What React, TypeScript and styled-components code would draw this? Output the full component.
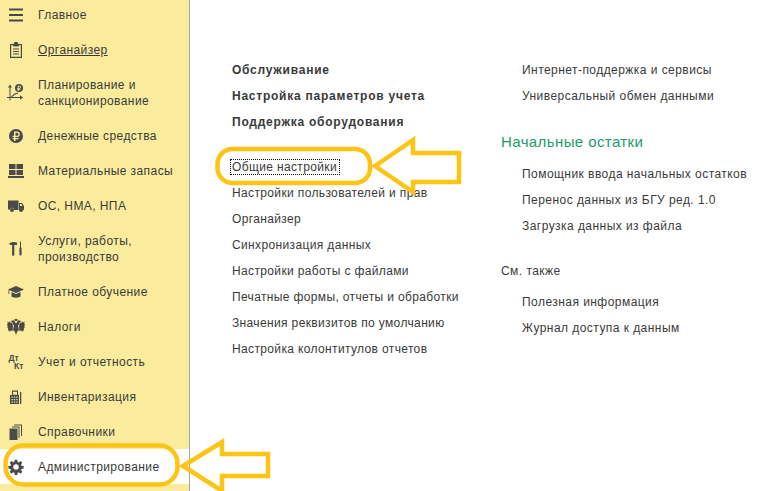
import React from "react";
import styled, { createGlobalStyle } from "styled-components";

const Global = createGlobalStyle`
  html, body { margin: 0; padding: 0; background: #fff; }
  body { font-family: "Liberation Sans", Arial, sans-serif; }
`;
const Page = styled.div`
  position: relative; width: 761px; height: 491px; overflow: hidden; display: flex; background: #fff;
`;
const Sidebar = styled.nav`
  width: 189px; height: 491px; flex: none; background: #fbec9d; border-right: 1px solid #a8a8a0; overflow: hidden;
`;
const SideList = styled.div`
  margin-top: -3px; display: flex; flex-direction: column;
`;
const SideItem = styled.div<{ $tall?: boolean; $active?: boolean }>`
  height: ${(p) => (p.$tall ? 51 : 35)}px; display: flex; align-items: center; flex: none;
  background: ${(p) => (p.$active ? "#fff" : "transparent")};
`;
const IconSlot = styled.div`
  width: 38px; flex: none; display: flex; justify-content: center; padding-right: 6px; box-sizing: border-box; color: #4a4a4a;
  svg { display: block; }
`;
const SideLabel = styled.span<{ $link?: boolean }>`
  font-size: 12px; line-height: 16px; letter-spacing: 0.42px; color: #3a3a3a; white-space: pre-line;
  text-decoration: ${(p) => (p.$link ? "underline" : "none")};
`;
const Main = styled.main`
  flex: 1; display: flex; padding-top: 57px; box-sizing: border-box;
`;
const LeftCol = styled.div`
  width: 269px; margin-left: 42px; flex: none; display: flex; flex-direction: column; letter-spacing: 0.36px;
`;
const RightCol = styled.div`
  display: flex; flex-direction: column; letter-spacing: 0.45px;
`;
const Row = styled.div<{ $bold?: boolean }>`
  height: 26px; line-height: 26px; font-size: 12px; white-space: nowrap;
  color: #3a3a3a; font-weight: ${(p) => (p.$bold ? 700 : 400)};
  letter-spacing: ${(p) => (p.$bold ? "0.76px" : "inherit")};
`;
const FocusText = styled.span`
  outline: 1px dotted #111; outline-offset: 0; padding: 0 2px 0 1px; margin-left: -1px;
`;
const Gap = styled.div<{ $h: number }>`
  height: ${(p) => p.$h}px; flex: none;
`;
const Group = styled.div`
  padding-left: 21px; display: flex; flex-direction: column;
`;
const GreenTitle = styled.div`
  font-size: 15px; line-height: 20px; letter-spacing: 0.4px; color: #1d9b6c; height: 20px;
`;
const SubTitle = styled.div`
  font-size: 12px; line-height: 16px; color: #3a3a3a; height: 16px;
`;
const Overlay = styled.svg`
  position: absolute; left: 0; top: 0; pointer-events: none;
`;

const S = { width: 18, height: 18, viewBox: "0 0 18 18", fill: "currentColor" } as const;
const icons: Record<string, React.ReactNode> = {
  menu: <svg {...S}><path d="M2 2.500h14v2H2zM2 8h14v2H2zM2 13.500h14v2H2z" /></svg>,
  org: <svg {...S}><path fillRule="evenodd" d="M3 3h3.500L7.500 1h3l1 2H15v14H3zM4.200 4.200v11.600h9.600V4.200h-2v1.300H6.200V4.200z" /><path d="M6 7.500h6v1H6zM6 10h6v1H6zM6 12.500h6v1H6z" /></svg>,
  plan: <svg {...S}><path d="M3 .5 1 3.500h1.500V13H0v1h2.500v2.500h1V14H13v1.800l3-2.300-3-2.300V13H3.500V3.500H5z" /><path d="M4 12.500l3.500-3 3.500-1 .3 1-3.200.9-3.300 2.900z" /><circle cx="12" cy="4" r="4" /><path fill="#fbec9d" d="M10.800 1.800h1.700a1.400 1.400 0 0 1 0 2.900h-.8v.6h1.700v.8h-1.700v1h-.9v-1h-.7v-.8h.7v-.6h-.7v-.8h.7zm.9.800v1.300h.8a.65.65 0 0 0 0-1.300z" /></svg>,
  money: <svg {...S}><circle cx="9" cy="9" r="7" /><path fill="#fbec9d" d="M7 4.500h3a2.800 2.800 0 0 1 0 5.600H8.500V11h3v1.300h-3V14H7v-1.700H5.500V11H7v-.9H5.500V8.800H7zm1.500 1.300v3H10a1.500 1.500 0 0 0 0-3z" /></svg>,
  grid: <svg {...S}><path d="M2 2h6.500v5H2zM9.500 2H16v5H9.500zM2 8h6.500v5H2zM9.500 8H16v5H9.500zM1 14h16v2H1z" /></svg>,
  truck: <svg {...S}><path d="M1 3.500h10.500V13H7a2 2 0 0 0-4-.5H1z" /><path fillRule="evenodd" d="M12 6h3l2 3v4h-.8a2.200 2.200 0 0 0-4.200 0zM13 7v2h2.500L14.300 7z" /><circle cx="5" cy="13" r="2" /><circle cx="14" cy="13" r="2" /></svg>,
  tools: <svg {...S}><path d="M2 4c1-1.500 3-2 5-2l3 .5V5H7.300v9.800a1.100 1.100 0 0 1-2.200 0V5H3.500z" /><path d="M13 1.500h1v5.700l.6 1v6.300a1.100 1.100 0 0 1-2.200 0V8.200l.6-1z" /></svg>,
  cap: <svg {...S}><path d="M9 3 1 6.500l8 3.500 8-3.500z" /><path d="M4.500 9v4.500c1.500 1.500 7.500 1.500 9 0V9L9 11z" /><path d="M1.500 7h.8v4h-.8z" /></svg>,
  eagle: <svg {...S}>
    <path d="M7.300 1h3.400l-.6 2H7.900z" />
    <path d="M4.500 3c1-1 2.600-.8 3.200.3L8.300 5h1.400l.6-1.700c.6-1.100 2.200-1.300 3.200-.3l.7.900-1.600.4-.2 1.500-1.400 1.900 1 4.300-1.800 1.800L9 17l-1.200-3.200L6 12l1-4.300-1.400-1.900-.2-1.500-1.600-.4z" />
    <path d="M.5 3.500 2 4.500l.8-1.300 1 2 .9-.7 1.300 3.300-.3 5-2-.2-.5 1.400-1.200-1.500-.7.4-.2-2.400-.8-1.200.5-1.200-.9-1.300.7-.8z" />
    <path d="M17.500 3.500 16 4.500l-.8-1.300-1 2-.9-.7-1.300 3.300.3 5 2-.2.5 1.400 1.200-1.500.7.4.2-2.400.8-1.200-.5-1.200.9-1.300-.7-.8z" />
  </svg>,
  dtkt: <svg {...S}>
    <text x="1.500" y="7.500" fontFamily="'Liberation Sans', sans-serif" fontSize="8.500" fontWeight="700">Дт</text>
    <text x="7" y="15.500" fontFamily="'Liberation Sans', sans-serif" fontSize="8.500" fontWeight="700">Кт</text>
  </svg>,
  calc: <svg {...S}><path fillRule="evenodd" d="M5 2.500h6V7h1v9H3V7h2zM6 3.700v3h4v-3z" /><path d="M13 4h1.300v12H13z" /><path fill="#fbec9d" d="M4.500 8.500h1.300v1.300H4.500zM6.900 8.500h1.300v1.300H6.900zM9.300 8.500h1.300v1.300H9.300zM4.500 11h1.300v1.300H4.500zM6.900 11h1.300v1.300H6.900zM9.300 11h1.300v1.300H9.300zM4.500 13.500h1.300v1.300H4.500zM6.900 13.500h1.300v1.300H6.900zM9.300 13.500h1.300v1.300H9.300z" /></svg>,
  books: <svg {...S}><path d="M2.500 5.500h8V17h-8z" /><path d="M5 3.500h7.500V15h-1V4.500H5zM7 1.500h8V13h-1V2.500H7z" /></svg>,
  gear: <svg {...S}><g transform="translate(1.350 1.350) scale(.85)"><path fillRule="evenodd" d="M7.500 .5h3l.4 2.500 1.300.6L14.300 2l2.100 2.100-1.500 2.100.6 1.300 2.500.4v3l-2.500.4-.6 1.300 1.500 2.100-2.100 2.100-2.100-1.500-1.300.6-.4 2.500h-3l-.4-2.500-1.300-.6-2.100 1.500-2.100-2.100 1.500-2.100-.6-1.300L0 10.900v-3l2.500-.4.600-1.300L1.600 4.100 3.700 2l2.100 1.500 1.300-.6zM9 5.800a3.200 3.200 0 1 0 0 6.400 3.200 3.200 0 0 0 0-6.400z" /></g></svg>,
};

const side = [
  { i: "menu", t: "Главное" },
  { i: "org", t: "Органайзер", link: true },
  { i: "plan", t: "Планирование и\nсанкционирование", tall: true },
  { i: "money", t: "Денежные средства" },
  { i: "grid", t: "Материальные запасы" },
  { i: "truck", t: "ОС, НМА, НПА" },
  { i: "tools", t: "Услуги, работы,\nпроизводство", tall: true },
  { i: "cap", t: "Платное обучение" },
  { i: "eagle", t: "Налоги" },
  { i: "dtkt", t: "Учет и отчетность" },
  { i: "calc", t: "Инвентаризация" },
  { i: "books", t: "Справочники" },
  { i: "gear", t: "Администрирование", active: true },
];

const ring = "#fdc416";

export default function App() {
  return (
    <Page>
      <Global />
      <Sidebar>
        <SideList>
          {side.map((s) => (
            <SideItem key={s.t} $tall={s.tall} $active={s.active}>
              <IconSlot>{icons[s.i]}</IconSlot>
              <SideLabel $link={s.link}>{s.t}</SideLabel>
            </SideItem>
          ))}
        </SideList>
      </Sidebar>
      <Main>
        <LeftCol>
          <Row $bold>Обслуживание</Row>
          <Row $bold>Настройка параметров учета</Row>
          <Row $bold>Поддержка оборудования</Row>
          <Gap $h={19} />
          <Row><FocusText>Общие настройки</FocusText></Row>
          <Row>Настройки пользователей и прав</Row>
          <Row>Органайзер</Row>
          <Row>Синхронизация данных</Row>
          <Row>Настройки работы с файлами</Row>
          <Row>Печатные формы, отчеты и обработки</Row>
          <Row>Значения реквизитов по умолчанию</Row>
          <Row>Настройка колонтитулов отчетов</Row>
        </LeftCol>
        <RightCol>
          <Group>
            <Row>Интернет-поддержка и сервисы</Row>
            <Row>Универсальный обмен данными</Row>
          </Group>
          <Gap $h={23} />
          <GreenTitle>Начальные остатки</GreenTitle>
          <Gap $h={9} />
          <Group>
            <Row>Помощник ввода начальных остатков</Row>
            <Row>Перенос данных из БГУ ред. 1.0</Row>
            <Row>Загрузка данных из файла</Row>
          </Group>
          <Gap $h={24} />
          <SubTitle>См. также</SubTitle>
          <Gap $h={10} />
          <Group>
            <Row>Полезная информация</Row>
            <Row>Журнал доступа к данным</Row>
          </Group>
        </RightCol>
      </Main>
      <Overlay width={761} height={491} viewBox="0 0 761 491" fill="none" stroke={ring} strokeWidth={4.5}>
        <rect x="5.500" y="445.500" width="172" height="39" rx="18" />
        <path d="M183 466 222 442V454H268V476H222V491Z" />
        <rect x="217.500" y="149" width="152.500" height="34" rx="15" />
        <path d="M375 166 413 140V153H459V182H413V192Z" />
      </Overlay>
    </Page>
  );
}
